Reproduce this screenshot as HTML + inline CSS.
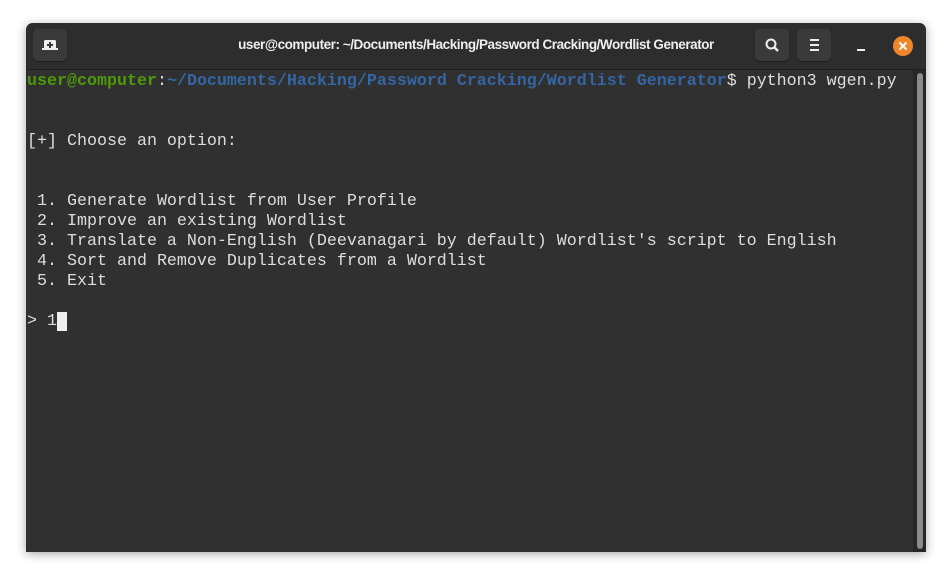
<!DOCTYPE html>
<html><head><style>
body{margin:0;width:952px;height:581px;background:#fff;overflow:hidden;position:relative;font-family:"Liberation Sans",sans-serif}
.win{position:absolute;left:26px;top:23px;width:900px;height:529px;background:#303030;border-radius:7px 7px 0 0;box-shadow:0 2px 10px rgba(0,0,0,.35);overflow:hidden}
.hdr{position:absolute;left:0;top:0;width:900px;height:46px;background:#2d2d2d;border-bottom:1px solid #1e1e1e}
.btn{position:absolute;top:6px;width:34px;height:32px;background:#3a3a3a;border-radius:5px;box-shadow:0 1px 1px rgba(0,0,0,.4)}
.title{position:absolute;left:0;right:0;top:14px;text-align:center;color:#eee;font-weight:bold;font-size:13.5px;letter-spacing:-0.45px}
.term{position:absolute;left:1px;top:49px;font-family:"Liberation Mono",monospace;font-size:16.67px;line-height:20px;color:#ddd;white-space:pre}
.g{color:#4e9a06;font-weight:bold}.b{color:#3465a4;font-weight:bold}
.sb{position:absolute;left:887px;top:47px;width:13px;height:482px;background:#262626}
.th{position:absolute;left:891px;top:50px;width:6px;height:476px;background:#8a8a8a;border-radius:3px}
</style></head><body>
<div class="win">
<div class="hdr">
<div class="btn" style="left:7px"><svg width="34" height="32"><rect x="11" y="11" width="12" height="10" rx="1.5" fill="#eee"/><rect x="9" y="19" width="16" height="2" fill="#eee"/><path d="M17 13v6M14 16h6" stroke="#3a3a3a" stroke-width="2"/></svg></div>
<div class="title">user@computer: ~/Documents/Hacking/Password Cracking/Wordlist Generator</div>
<div class="btn" style="left:729px"><svg width="34" height="32"><circle cx="16" cy="15" r="4.5" stroke="#eee" stroke-width="2" fill="none"/><path d="M19 18l4 4" stroke="#eee" stroke-width="2.4"/></svg></div>
<div class="btn" style="left:771px"><svg width="34" height="32"><path d="M13 11h9M13 16h9M13 21h9" stroke="#eee" stroke-width="2"/></svg></div>
<svg style="position:absolute;left:826px;top:14px" width="20" height="20"><path d="M5 13h8" stroke="#eee" stroke-width="2"/></svg>
<svg style="position:absolute;left:866px;top:12px" width="22" height="22"><circle cx="11" cy="11" r="10" fill="#f0862a"/><path d="M7.5 7.5l7 7M14.5 7.5l-7 7" stroke="#fff" stroke-width="2"/></svg>
</div>
<div class="term"><span class="g">user@computer</span>:<span class="b">~/Documents/Hacking/Password Cracking/Wordlist Generator</span>$ python3 wgen.py


[+] Choose an option:


 1. Generate Wordlist from User Profile
 2. Improve an existing Wordlist
 3. Translate a Non-English (Deevanagari by default) Wordlist's script to English
 4. Sort and Remove Duplicates from a Wordlist
 5. Exit

&gt; 1<span style="background:#eee"> </span></div>
<div class="sb"></div><div class="th"></div>
</div>
</body></html>
